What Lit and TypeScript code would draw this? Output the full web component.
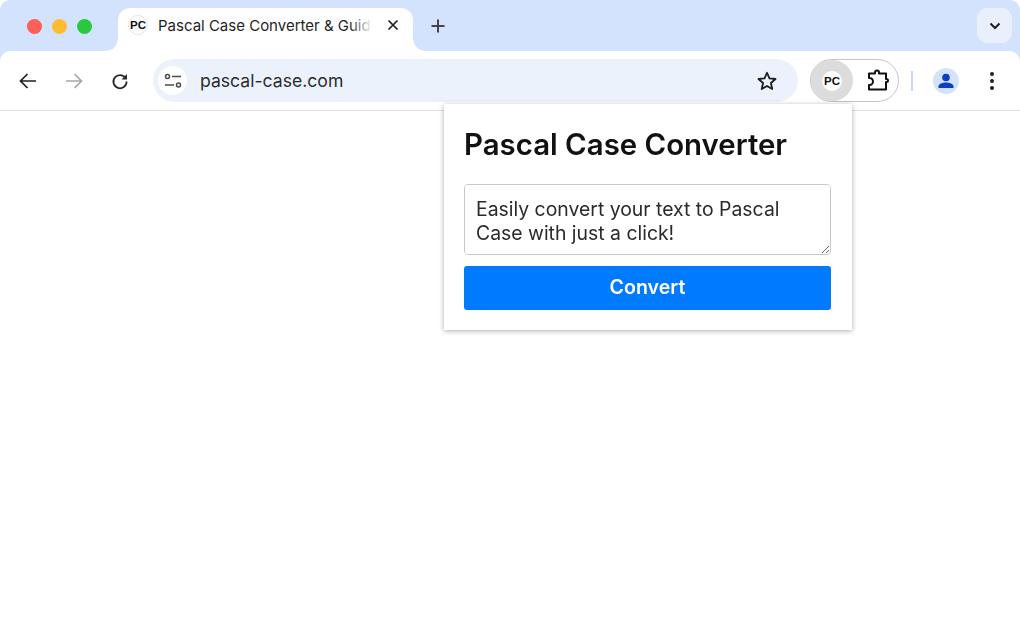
import { LitElement, html, css } from 'lit'
import { customElement } from 'lit/decorators.js'

@customElement('app-root')
export class AppRoot extends LitElement {
  static styles = css`
    :host {
      display: block;
      position: relative;
      width: 1020px;
      height: 638px;
      overflow: hidden;
      background: #fff;
      font-family: Inter, 'Liberation Sans', sans-serif;
      color: #1f1f1f;
      filter: blur(0.35px);
    }

    svg {
      display: block;
      flex: none;
    }

    .tabstrip {
      display: flex;
      align-items: flex-end;
      height: 51px;
      padding-left: 118px;
      padding-right: 8px;
      background: #d3e3fd;
      border-radius: 10px 10px 0 0;
      box-sizing: border-box;
    }

    .lights {
      position: absolute;
      left: 27px;
      top: 19px;
      display: flex;
      gap: 10px;
    }

    .light {
      width: 15px;
      height: 15px;
      border-radius: 50%;
    }

    .red { background: #ff5f57; }
    .yellow { background: #febc2e; }
    .green { background: #28c840; }

    .tab {
      position: relative;
      display: flex;
      align-items: center;
      width: 295px;
      height: 43px;
      padding: 0 13px 9px 10px;
      box-sizing: border-box;
      background: #fff;
      border-radius: 12px 12px 0 0;
    }

    .tab::before,
    .tab::after {
      content: '';
      position: absolute;
      bottom: 0;
      width: 12px;
      height: 12px;
    }

    .tab::before {
      left: -12px;
      background: radial-gradient(circle at 0 0, #d3e3fd 11.5px, #fff 12px);
    }

    .tab::after {
      right: -12px;
      background: radial-gradient(circle at 100% 0, #d3e3fd 11.5px, #fff 12px);
    }

    .favicon {
      display: flex;
      align-items: center;
      justify-content: center;
      flex: none;
      width: 20px;
      height: 20px;
      border-radius: 50%;
      background: #fff;
      border: 1px solid #e4e4e4;
      box-sizing: border-box;
      font-family: 'Liberation Sans', sans-serif;
      font-size: 11.5px;
      font-weight: 700;
      color: #111;
    }

    .title-wrap {
      position: relative;
      flex: 1;
      margin-left: 10px;
      margin-right: 14px;
      overflow: hidden;
      white-space: nowrap;
      font-size: 15px;
      color: #1f1f1f;
    }

    .title-wrap::after {
      content: '';
      position: absolute;
      right: 0;
      top: 0;
      bottom: 0;
      width: 22px;
      background: linear-gradient(to right, rgba(255, 255, 255, 0), #fff);
    }

    .new-tab {
      margin-left: 18px;
      margin-bottom: 18px;
    }

    .tab-search {
      display: flex;
      align-items: center;
      justify-content: center;
      width: 35px;
      height: 35px;
      margin-left: auto;
      margin-bottom: 8px;
      border-radius: 10px;
      background: #e9f0fc;
    }

    .toolbar {
      position: relative;
      display: flex;
      align-items: center;
      height: 60px;
      padding: 0 14px 0 16px;
      box-sizing: border-box;
      background: #fff;
      border-bottom: 1px solid #e2e2e2;
    }

    .corner {
      position: absolute;
      top: 0;
      width: 10px;
      height: 10px;
    }

    .corner.left {
      left: 0;
      background: radial-gradient(circle at 100% 100%, #fff 9.5px, #d3e3fd 10px);
    }

    .corner.right {
      right: 0;
      background: radial-gradient(circle at 0 100%, #fff 9.5px, #d3e3fd 10px);
    }

    .nav {
      display: flex;
      align-items: center;
      gap: 22px;
    }

    .omnibox {
      display: flex;
      align-items: center;
      width: 645px;
      height: 43px;
      margin-left: 21px;
      padding: 0 20px 0 5px;
      box-sizing: border-box;
      border-radius: 22px;
      background: #ecf2fb;
    }

    .site-info {
      display: flex;
      align-items: center;
      justify-content: center;
      width: 29px;
      height: 29px;
      border-radius: 50%;
      background: #fff;
    }

    .url {
      flex: 1;
      margin-left: 13px;
      font-size: 17.6px;
      color: #2b2b2b;
    }

    .ext-pill {
      display: flex;
      align-items: center;
      width: 89px;
      height: 43px;
      margin-left: 12px;
      box-sizing: border-box;
      border: 1px solid #c4c4c4;
      border-radius: 22px;
    }

    .ext-active {
      display: flex;
      align-items: center;
      justify-content: center;
      width: 42px;
      height: 41px;
      border-radius: 21px;
      background: #dcdcdc;
    }

    .ext-puzzle {
      margin-left: 13px;
    }

    .divider {
      width: 2px;
      height: 20px;
      margin-left: 12px;
      background: #c7d9f7;
    }

    .avatar {
      display: flex;
      align-items: center;
      justify-content: center;
      width: 26px;
      height: 26px;
      margin-left: 20px;
      border-radius: 50%;
      background: #d3e3fd;
    }

    .menu {
      margin-left: 31px;
    }

    .popup {
      position: absolute;
      left: 444px;
      top: 104px;
      width: 408px;
      height: 226px;
      padding: 21px 21px 20px 20px;
      box-sizing: border-box;
      background: #fff;
      box-shadow: 0 1px 5px rgba(0, 0, 0, 0.32);
    }

    h1 {
      margin: 0 0 19px;
      font-size: 29.4px;
      line-height: 40px;
      font-weight: 600;
      color: #111;
    }

    textarea {
      display: block;
      width: 100%;
      height: 71px;
      margin: 0 0 11px;
      padding: 12px 11px 10px;
      box-sizing: border-box;
      border: 1px solid #c9c9c9;
      border-radius: 4px;
      outline: none;
      font-family: inherit;
      font-size: 19.4px;
      line-height: 24px;
      color: #2a2a2a;
      resize: vertical;
    }

    button {
      display: block;
      width: 100%;
      height: 44px;
      padding: 0 0 2px;
      border: none;
      border-radius: 3px;
      background: #007bff;
      color: #fff;
      font-family: inherit;
      font-size: 19.6px;
      font-weight: 600;
    }
  `

  render () {
    return html`
      <div class="tabstrip">
        <div class="lights">
          <div class="light red"></div>
          <div class="light yellow"></div>
          <div class="light green"></div>
        </div>
        <div class="tab">
          <div class="favicon">PC</div>
          <div class="title-wrap">Pascal Case Converter &amp; Guide</div>
          <svg width="14" height="14" viewBox="0 0 14 14"><path d="M2.500 2.500l9 9M11.500 2.500l-9 9" stroke="#1f1f1f" stroke-width="1.700" fill="none"/></svg>
        </div>
        <svg class="new-tab" width="14" height="14" viewBox="0 0 14 14"><path d="M7 0.500v13M0.500 7h13" stroke="#444" stroke-width="2" fill="none"/></svg>
        <div class="tab-search">
          <svg width="12" height="8" viewBox="0 0 12 8"><path d="M1.500 1.500L6 6l4.500-4.500" stroke="#1f1f1f" stroke-width="2" fill="none"/></svg>
        </div>
      </div>
      <div class="toolbar">
        <div class="corner left"></div>
        <div class="corner right"></div>
        <div class="nav">
          <svg width="24" height="24" viewBox="0 0 24 24"><path d="M20 12H5M11.500 5l-7 7 7 7" stroke="#1f1f1f" stroke-width="1.700" fill="none"/></svg>
          <svg width="24" height="24" viewBox="0 0 24 24"><path d="M4 12h15M12.500 5l7 7-7 7" stroke="#a8a8a8" stroke-width="1.700" fill="none"/></svg>
          <svg width="24" height="24" viewBox="0 0 24 24"><path d="M17.800 9.500A6.600 6.600 0 1 0 18.600 12.500" stroke="#2a2a2a" stroke-width="1.800" fill="none"/><path d="M19 5v5.500h-5.500z" fill="#2a2a2a"/></svg>
        </div>
        <div class="omnibox">
          <div class="site-info">
            <svg width="20" height="20" viewBox="0 0 20 20" fill="none" stroke="#4a4a4a" stroke-width="1.500"><circle cx="4.500" cy="5.500" r="2"/><path d="M9 5.500h9M2 14h9"/><circle cx="15.500" cy="14" r="2"/></svg>
          </div>
          <div class="url">pascal-case.com</div>
          <svg width="22" height="22" viewBox="0 0 24 24"><path d="M12 3l2.700 6.100 6.600.7-5 4.400 1.400 6.500L12 17.400l-5.700 3.300 1.400-6.500-5-4.400 6.600-.7z" stroke="#1f1f1f" stroke-width="2" stroke-linejoin="round" fill="none"/></svg>
        </div>
        <div class="ext-pill">
          <div class="ext-active"><div class="favicon" style="border:none">PC</div></div>
          <svg class="ext-puzzle" width="24" height="24" viewBox="0 0 24 24"><path d="M3 4.500H9V3.500a2 2 0 0 1 4 0V4.500h7v5.500h.5a1.500 1.500 0 0 1 0 3H20V20.500H3V16h.5a3.500 3.500 0 0 0 0-7H3z" stroke="#111" stroke-width="2" stroke-linejoin="round" fill="none"/></svg>
        </div>
        <div class="divider"></div>
        <div class="avatar">
          <svg width="20" height="20" viewBox="0 0 20 20" fill="#0b3fc2"><circle cx="10" cy="6.500" r="3.800"/><path d="M2.500 17v-1.500c0-2.800 4.200-4 7.500-4s7.500 1.200 7.500 4V17z"/></svg>
        </div>
        <svg class="menu" width="4" height="20" viewBox="0 0 4 20" fill="#1f1f1f"><circle cx="2" cy="3" r="2"/><circle cx="2" cy="10" r="2"/><circle cx="2" cy="17" r="2"/></svg>
      </div>
      <div class="popup">
        <h1>Pascal Case Converter</h1>
        <textarea>Easily convert your text to Pascal Case with just a click!</textarea>
        <button>Convert</button>
      </div>
    `
  }
}
